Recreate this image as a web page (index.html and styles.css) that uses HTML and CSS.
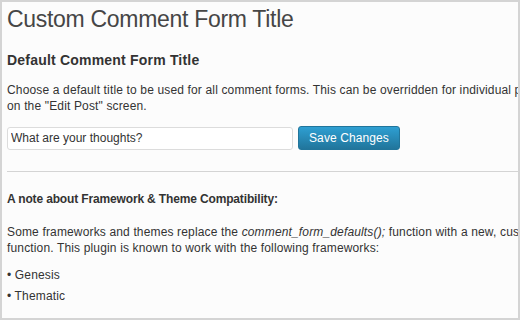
FILE: index.html
```
<!DOCTYPE html>
<html>
<head>
<meta charset="utf-8">
<link rel="stylesheet" href="styles.css">
</head>
<body>
<div class="frame">
  <div class="content">
    <h2 class="title">Custom Comment Form Title</h2>
    <h3 class="section">Default Comment Form Title</h3>
    <p class="text">Choose a default title to be used for all comment forms. This can be overridden for individual posts on the "Edit Post" screen.</p>
    <div class="form-row">
      <input class="field" type="text" value="What are your thoughts?">
      <button class="btn">Save Changes</button>
    </div>
    <hr class="rule">
    <h4 class="note">A note about Framework &amp; Theme Compatibility:</h4>
    <p class="text text-2">Some frameworks and themes replace the <em>comment_form_defaults();</em> function with a new, custom function. This plugin is known to work with the following frameworks:</p>
    <p class="item item-first">&bull; Genesis</p>
    <p class="item">&bull; Thematic</p>
  </div>
</div>
</body>
</html>
```
FILE: styles.css
```
html, body { margin: 0; padding: 0; }
body { font-family: "Liberation Sans", Arial, sans-serif; color: #333; }
.frame {
  width: 520px; height: 320px; box-sizing: border-box;
  border: 2px solid #d4d4d4; background: #fcfcfc; overflow: hidden;
}
.content { width: 543px; padding: 3px 0 0 5px; }
.title { font-size: 23px; font-weight: normal; color: #464646; margin: 0; line-height: 29px; letter-spacing: -0.3px; }
.section { font-size: 14px; font-weight: bold; color: #333; margin: 17px 0 0; line-height: 18px; letter-spacing: 0.2px; }
.text { font-size: 12px; line-height: 16px; margin: 13px 0 0; letter-spacing: 0.15px; }
.text-2 { margin-top: 17px; }
.form-row { display: flex; align-items: center; gap: 5px; margin-top: 12px; }
.field {
  width: 286px; height: 23px; box-sizing: border-box; border: 1px solid #dcdcdc; border-radius: 3px;
  background: #fff; font: 12px "Liberation Sans", Arial, sans-serif; color: #333; padding: 0 3px; margin: 0;
}
.btn {
  height: 24px; box-sizing: border-box; padding: 0 10px; border: 1px solid #21759b; border-radius: 3px;
  background: linear-gradient(#2e9fd2, #21759b); color: #fff; font: 12px "Liberation Sans", Arial, sans-serif;
  letter-spacing: 0.1px; margin: 0;
}
.rule { border: 0; border-top: 1px solid #d4d4d4; margin: 21px 0 0; height: 0; }
.note { font-size: 12px; font-weight: bold; margin: 19px 0 0; line-height: 16px; letter-spacing: -0.15px; }
.item { font-size: 12px; line-height: 16px; margin: 5px 0 0; letter-spacing: 0.15px; }
.item-first { margin-top: 11px; }
```
